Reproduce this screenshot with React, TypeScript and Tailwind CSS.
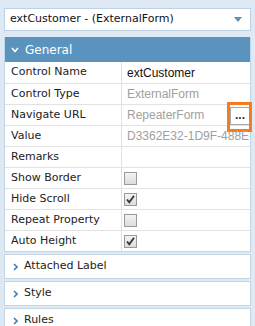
import { ReactNode } from 'react';

type Row = {
  label: string;
  value?: string;
  muted?: boolean;
  check?: boolean;
  browse?: boolean;
};

const rows: Row[] = [
  { label: 'Control Name', value: 'extCustomer' },
  { label: 'Control Type', value: 'ExternalForm', muted: true },
  { label: 'Navigate URL', value: 'RepeaterForm', muted: true, browse: true },
  { label: 'Value', value: 'D3362E32-1D9F-488E-A2C4-7B91F0C3E5D2', muted: true },
  { label: 'Remarks', value: '' },
  { label: 'Show Border', check: false },
  { label: 'Hide Scroll', check: true },
  { label: 'Repeat Property', check: false },
  { label: 'Auto Height', check: true },
];

const label = "font-['DejaVu_Sans',sans-serif]";
const value = "font-['Liberation_Sans',Arial,sans-serif]";

function Checkbox({ checked }: { checked: boolean }) {
  return (
    <div className="w-[13px] h-[13px] border border-[#9a9a9a] bg-gradient-to-b from-[#f4f4f4] to-[#dcdcdc] flex items-center justify-center">
      {checked && (
        <svg width="11" height="11" viewBox="0 0 11 11">
          <path d="M2 5.5 L4.3 8.3 L9 1.8" fill="none" stroke="#333" strokeWidth="1.8" />
        </svg>
      )}
    </div>
  );
}

function Section({ children }: { children: ReactNode }) {
  return (
    <div className="h-[25px] mt-[2px] bg-white border border-[#c3d6e8] flex items-center pl-[8px] gap-[6px]">
      <svg width="5" height="8" viewBox="0 0 5 8">
        <path d="M1 1 L4 4 L1 7" fill="none" stroke="#3f7fb5" strokeWidth="1.6" />
      </svg>
      <span className={`${label} text-[11px] text-[#222]`}>{children}</span>
    </div>
  );
}

export default function App() {
  return (
    <div className="w-[255px] h-[326px] bg-[#dfe9f3] overflow-hidden px-1 pt-2">
      {/* Control picker */}
      <div className="h-[23px] bg-white border border-[#bcd1e4] flex items-center justify-between pl-[5px] pr-[8px]">
        <span className={`${label} text-[11px] text-[#111]`}>extCustomer - (ExternalForm)</span>
        <svg width="8" height="5" viewBox="0 0 8 5">
          <path d="M0 0 H8 L4 5 Z" fill="#5b8fbd" />
        </svg>
      </div>

      {/* General */}
      <div className="mt-[6px] border border-[#c3d6e8] border-t-0 bg-white">
        <div className="h-[25px] bg-[#5b93bf] flex items-center pl-[6px] gap-[6px]">
          <svg width="8" height="6" viewBox="0 0 8 6">
            <path d="M1 1 L4 4.5 L7 1" fill="none" stroke="#fff" strokeWidth="1.6" />
          </svg>
          <span className={`${label} text-[12px] text-white`}>General</span>
        </div>
        {rows.map((r, i) => (
          <div
            key={r.label}
            className={`h-[21px] grid grid-cols-[117px_1fr] ${i > 0 ? 'border-t border-[#e2e2e2]' : ''}`}
          >
            <div className={`${label} text-[11px] text-[#222] pl-[6px] flex items-center border-r border-[#e2e2e2] whitespace-nowrap`}>
              {r.label}
            </div>
            <div className="relative flex items-center min-w-0">
              {r.check !== undefined ? (
                <div className="pl-[2px]">
                  <Checkbox checked={r.check} />
                </div>
              ) : (
                <span
                  className={`${value} text-[12px] pl-[5px] whitespace-nowrap overflow-hidden ${
                    r.muted ? 'text-[#a0a0a0]' : 'text-[#111]'
                  }`}
                >
                  {r.value}
                </span>
              )}
              {r.browse && (
                <>
                  <div className="absolute right-0 top-[2px] w-[20px] h-[18px] bg-white border border-[#a9a9a9] flex items-end justify-center pb-[3px]">
                    <span className={`${value} text-[12px] font-bold leading-none text-[#333]`}>...</span>
                  </div>
                  <div className="absolute right-[-2px] top-[-3px] w-[25px] h-[30px] border-[3px] border-[#f57c20]" />
                </>
              )}
            </div>
          </div>
        ))}
      </div>

      <Section>Attached Label</Section>
      <Section>Style</Section>
      <Section>Rules</Section>
    </div>
  );
}
